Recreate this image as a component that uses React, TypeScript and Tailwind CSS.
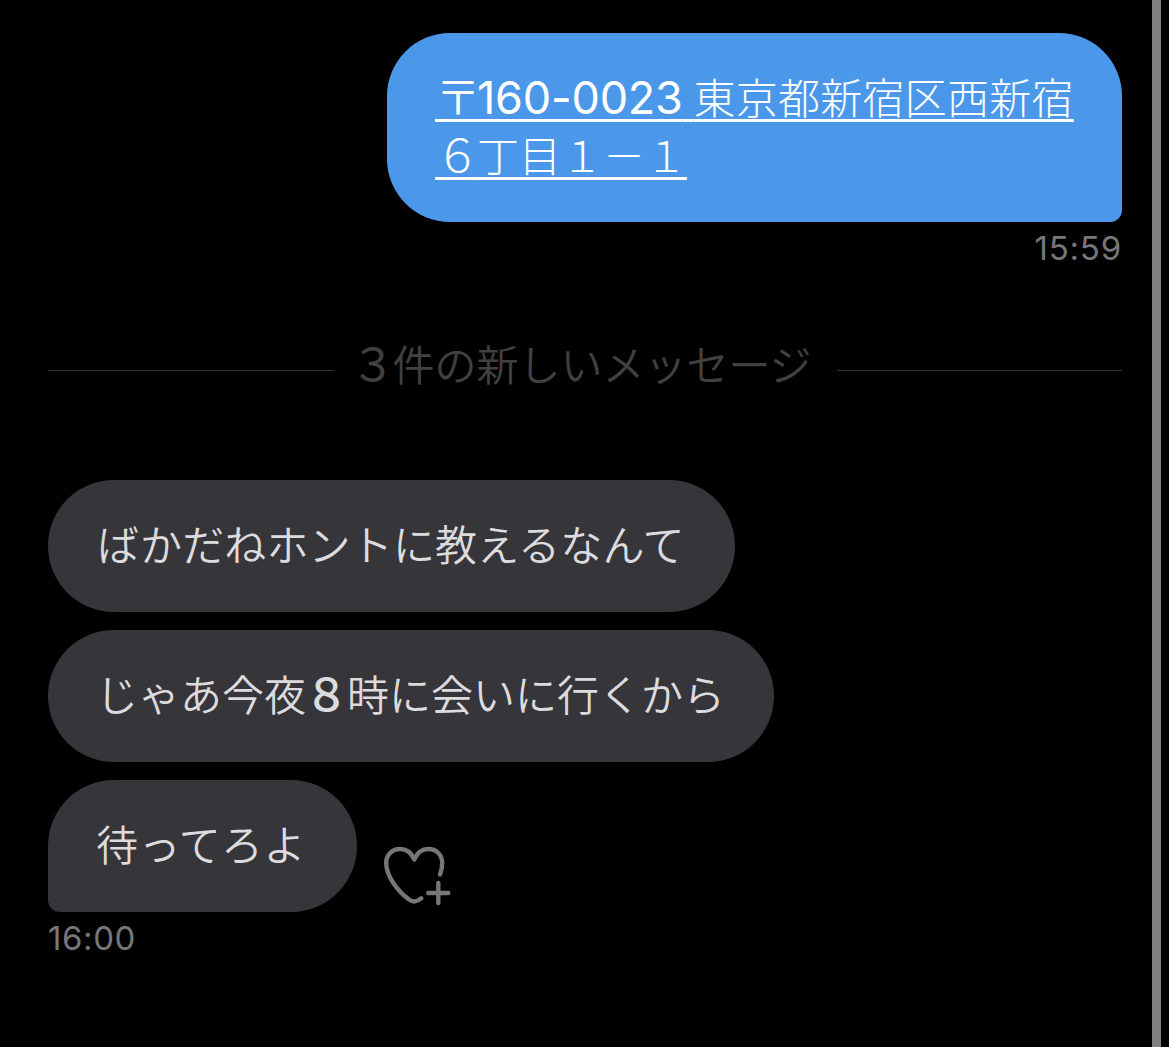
import type { ReactNode } from "react";

function Received({
  children,
  className,
}: {
  children: ReactNode;
  className: string;
}) {
  return (
    <div
      className={`h-[132px] rounded-[66px] bg-[#363539] pt-[37px] text-[#dcdbdf] ${className}`}
    >
      {children}
    </div>
  );
}

function HeartPlusIcon() {
  return (
    <svg
      width="70"
      height="62"
      viewBox="0 0 70 62"
      fill="none"
      stroke="#77767a"
      strokeWidth="4.4"
      strokeLinecap="round"
      strokeLinejoin="round"
    >
      <path d="M58 29.500C59.800 25 60.300 21.500 60.200 17.500C60 9.500 54 4 46.500 4C40 4 35 8 32.300 14.500C29.500 8 24.500 4 18 4C10 4 4.200 10 4.200 18C4.200 31.500 16 46.500 27 54.500C31.500 57.500 34.500 57 39.300 53.300" />
      <path d="M56.300 38V58M46.300 48H66.300" />
    </svg>
  );
}

export default function App() {
  return (
    <main className="flex h-[1047px] w-[1169px] overflow-hidden bg-black font-['Inter','Noto_Sans_CJK_JP',sans-serif] text-[42px] font-[350] leading-[58px]">
      <div className="flex flex-1 flex-col pl-12 pr-[30px] pt-[33px]">
        <section className="flex flex-col items-end">
          <div className="h-[189px] w-[735px] rounded-[63px] rounded-br-[12px] bg-[#4b98eb] pl-12 pt-[37px] text-white">
            <a
              href="#"
              className="whitespace-nowrap font-light underline decoration-[3px] underline-offset-[5px] [text-decoration-skip-ink:none]"
            >
              <span className="text-[46px] leading-none tracking-[-4px]">〒</span>
              <span className="text-[45px] font-normal leading-none tracking-[-0.2px]">
                160-0023
              </span>
              <span className="tracking-[-1px]"> </span>
              <span className="tracking-[0.25px]">東京都新宿区西新宿</span>
              <br />
              <span className="text-[45px] leading-none tracking-[-3px]">６</span>
              丁目１－１
            </a>
          </div>
          <time className="mt-1 text-[33px] font-normal leading-[44px] tracking-[0.8px] text-[#77767a]">
            15:59
          </time>
        </section>

        <div className="mt-[67px] flex h-[68px] items-center gap-[21px] text-[#414043]">
          <span className="-mt-[2px] h-px flex-1 bg-[#353437]" />
          <span className="relative -left-1 -mt-[10px] whitespace-nowrap">
            <span className="text-[45px] font-normal leading-none tracking-[-3px]">
              ３
            </span>
            件の新しいメッセージ
          </span>
          <span className="-mt-[2px] h-px flex-1 bg-[#353437]" />
        </div>

        <section className="mt-[75px] flex flex-col items-start gap-[18px] whitespace-nowrap">
          <Received className="w-[687px] pl-[49px] tracking-[0.15px]">
            ばかだねホントに教えるなんて
          </Received>
          <Received className="w-[726px] pl-12">
            じゃあ今夜
            <span className="relative -left-[2px] text-[45px] font-medium leading-none tracking-[-4px]">
              ８
            </span>
            時に会いに行くから
          </Received>
          <div className="flex items-end gap-[25px]">
            <Received className="w-[309px] rounded-bl-[12px] pl-12 tracking-[0.4px]">
              待ってろよ
            </Received>
            <button className="mb-[5px]" aria-label="Add reaction">
              <HeartPlusIcon />
            </button>
          </div>
        </section>
        <time className="mt-1 text-[33px] font-normal leading-[44px] tracking-[0.6px] text-[#77767a]">
          16:00
        </time>
      </div>
      <div className="mr-2 w-[9px] bg-[#808080]" />
    </main>
  );
}
